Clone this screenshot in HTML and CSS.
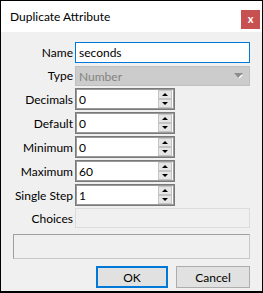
FILE: index.html
```html
<!DOCTYPE html>
<html lang="en">
<head>
    <meta charset="UTF-8">
    <title>Duplicate Attribute</title>
    <link rel="stylesheet" href="styles.css">
</head>
<body>
    <div class="dialog">
        <div class="titlebar">
            <span class="title">Duplicate Attribute</span>
            <span class="close">x</span>
        </div>
        <div class="content">
            <div class="form">
                <label>Name</label>
                <div class="field text focused">seconds</div>

                <label>Type</label>
                <div class="field combo">
                    <span>Number</span>
                    <svg class="combo-arrow" width="9" height="6" viewBox="0 0 9 6">
                        <path d="M0 0h9L4.5 5z" fill="#8c8c8c"/>
                        <path d="M5 5l3-3" stroke="#fff" stroke-width="1.2"/>
                    </svg>
                </div>

                <label>Decimals</label>
                <div class="field spin"><span>0</span><div class="spin-btns"><b class="up"></b><b class="down"></b></div></div>

                <label>Default</label>
                <div class="field spin"><span>0</span><div class="spin-btns"><b class="up"></b><b class="down"></b></div></div>

                <label>Minimum</label>
                <div class="field spin"><span>0</span><div class="spin-btns"><b class="up"></b><b class="down"></b></div></div>

                <label>Maximum</label>
                <div class="field spin"><span>60</span><div class="spin-btns"><b class="up"></b><b class="down"></b></div></div>

                <label>Single Step</label>
                <div class="field spin"><span>1</span><div class="spin-btns"><b class="up"></b><b class="down"></b></div></div>

                <label>Choices</label>
                <div class="field choices"></div>

                <div class="message"></div>
            </div>
            <div class="buttons">
                <button class="btn default">OK</button>
                <button class="btn">Cancel</button>
            </div>
        </div>
    </div>
</body>
</html>
```

FILE: styles.css
```css
* {
    box-sizing: border-box;
}
html, body {
    margin: 0;
    padding: 0;
}
body {
    font-family: Lato, 'Noto Sans', sans-serif;
    font-size: 12px;
    color: #000;
}
.dialog {
    width: 263px;
    height: 293px;
    border: 1px solid #000;
    border-bottom-width: 2px;
    display: flex;
    flex-direction: column;
    background-color: #f0f0f0;
}
.titlebar {
    height: 31px;
    background-color: #fff;
    display: flex;
    align-items: center;
    justify-content: space-between;
    padding: 0 2px 0 9px;
}
.title {
    font-size: 12px;
    margin-top: -1px;
}
.close {
    width: 19px;
    height: 19px;
    margin-top: 6px;
    background-color: #c75050;
    color: #fff;
    font-weight: bold;
    font-size: 11px;
    line-height: 17px;
    text-align: center;
}
.content {
    padding: 10px 12px 0 12px;
}
.form {
    display: grid;
    grid-template-columns: 60px 1fr;
    column-gap: 2px;
    row-gap: 2px;
    align-items: center;
}
.form label {
    text-align: right;
    white-space: nowrap;
}
.field {
    display: flex;
    align-items: center;
    padding-left: 3px;
    background-color: #fff;
}
.text {
    height: 21px;
    border: 1px solid #7a7a7a;
}
.text.focused {
    border-color: #0078d7;
}
.combo {
    height: 20px;
    margin-top: 1px;
    background-color: #cccccc;
    border: 1px solid #bfbfbf;
    color: #838383;
    justify-content: space-between;
    padding-right: 6px;
}
.spin {
    width: 100px;
    height: 22px;
    border: 1px solid #7a7a7a;
    box-shadow: inset 0 0 0 1px #9a9a9a;
    justify-content: space-between;
    padding: 2px 2px 2px 3px;
}
.spin-btns {
    width: 14px;
    height: 18px;
    display: flex;
    flex-direction: column;
}
.spin-btns b {
    flex: 1;
    background-color: #e5e5e5;
    border: 1px solid #c4c4c4;
    position: relative;
}
.spin-btns b::after {
    content: '';
    position: absolute;
    left: 3px;
    top: 2px;
    border-left: 3px solid transparent;
    border-right: 3px solid transparent;
}
.spin-btns .up::after {
    border-bottom: 3px solid #000;
}
.spin-btns .down::after {
    border-top: 3px solid #000;
}
.choices {
    height: 20px;
    background-color: #f0f0f0;
    border: 1px solid #dcdcdc;
}
.message {
    grid-column: 1 / 3;
    height: 25px;
    margin-top: 4px;
    border: 1px solid #c8c8c8;
    border-top-color: #a0a0a0;
    border-left-color: #a0a0a0;
}
.buttons {
    display: flex;
    justify-content: flex-end;
    gap: 8px;
    margin-top: 7px;
}
.btn {
    width: 74px;
    height: 22px;
    font-family: inherit;
    font-size: 12px;
    background-color: #e1e1e1;
    border: 1px solid #adadad;
    padding: 0;
    color: #000;
}
.btn.default {
    width: 72px;
    border: 2px solid #0078d7;
}
```
